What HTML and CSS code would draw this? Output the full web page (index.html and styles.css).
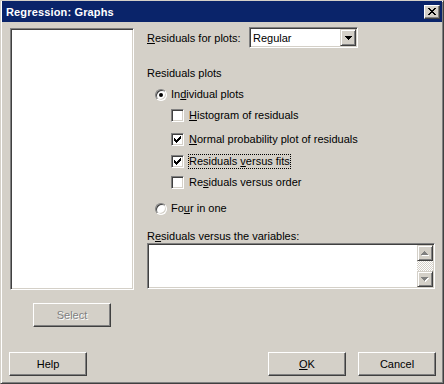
FILE: index.html
```html
<!DOCTYPE html>
<html lang="en">
<head>
  <meta charset="UTF-8" />
  <title>Regression: Graphs</title>
  <link rel="stylesheet" href="styles.css">
</head>
<body>

<div class="window">
  <div class="titlebar">
    <span class="title">Regression: Graphs</span>
    <span class="close-btn">
      <svg width="8" height="7" viewBox="0 0 8 7" shape-rendering="crispEdges">
        <path d="M0 0h2v1H0z M6 0h2v1H6z M1 1h2v1H1z M5 1h2v1H5z M2 2h4v1H2z M3 3h2v1H3z M2 4h4v1H2z M1 5h2v1H1z M5 5h2v1H5z M0 6h2v1H0z M6 6h2v1H6z" fill="#000"/>
      </svg>
    </span>
  </div>

  <div class="content">
    <div class="left-col">
      <div class="listbox"></div>
      <button class="btn select-btn" disabled>Select</button>
    </div>

    <div class="right-col">
      <div class="field-row">
        <span class="field-label"><u>R</u>esiduals for plots:</span>
        <div class="combo">
          <span class="combo-text">Regular</span>
          <span class="arrow-btn">
            <svg width="7" height="4" viewBox="0 0 7 4" shape-rendering="crispEdges">
              <path d="M0 0h7v1H0z M1 1h5v1H1z M2 2h3v1H2z M3 3h1v1H3z" fill="#000"/>
            </svg>
          </span>
        </div>
      </div>

      <div class="group-label">Residuals plots</div>

      <div class="option radio-row row-individual"><span class="radio checked"></span>In<u>d</u>ividual plots</div>

      <div class="option check-row row-hist"><span class="checkbox"></span><u>H</u>istogram of residuals</div>
      <div class="option check-row row-normal"><span class="checkbox checked"></span><u>N</u>ormal probability plot of residuals</div>
      <div class="option check-row row-fits"><span class="checkbox checked"></span><span class="focus">Residuals <u>v</u>ersus fits</span></div>
      <div class="option check-row row-order"><span class="checkbox"></span>Re<u>s</u>iduals versus order</div>

      <div class="option radio-row row-four"><span class="radio"></span>Fo<u>u</u>r in one</div>

      <div class="vars-label">R<u>e</u>siduals versus the variables:</div>
      <div class="vars-box">
        <div class="vars-text"></div>
        <div class="scrollbar">
          <span class="arrow-btn scroll-btn">
            <svg width="8" height="5" viewBox="0 0 8 5" shape-rendering="crispEdges">
              <path d="M4 1h1v1H4z M3 2h3v1H3z M2 3h5v1H2z M1 4h7v1H1z" fill="#fff"/>
              <path d="M3 0h1v1H3z M2 1h3v1H2z M1 2h5v1H1z M0 3h7v1H0z" fill="#808080"/>
            </svg>
          </span>
          <span class="track"></span>
          <span class="arrow-btn scroll-btn">
            <svg width="8" height="5" viewBox="0 0 8 5" shape-rendering="crispEdges">
              <path d="M1 1h7v1H1z M2 2h5v1H2z M3 3h3v1H3z M4 4h1v1H4z" fill="#fff"/>
              <path d="M0 0h7v1H0z M1 1h5v1H1z M2 2h3v1H2z M3 3h1v1H3z" fill="#808080"/>
            </svg>
          </span>
        </div>
      </div>
    </div>
  </div>

  <div class="footer">
    <button class="btn">Help</button>
    <span class="spacer"></span>
    <button class="btn"><u>O</u>K</button>
    <button class="btn">Cancel</button>
  </div>
</div>

</body>
</html>
```

FILE: styles.css
```css
body { margin: 0; padding: 0; background-color: #d4d0c8; font-family: "Liberation Sans", Arial, sans-serif; font-size: 11px; color: #000; }

/* window frame */
.window {
  width: 444px; height: 384px; box-sizing: border-box; display: flex; flex-direction: column;
  background-color: #d4d0c8; padding: 0 1px 1px 1px;
  border: 1px solid; border-color: #d4d0c8 #404040 #404040 #d4d0c8;
  box-shadow: inset 1px 1px #fff, inset -1px -1px #808080;
}
.titlebar { height: 21px; background-color: #0a246a; display: flex; align-items: center; justify-content: space-between; padding: 0 2px 0 4px; }
.title { color: white; font-weight: bold; font-size: 11px; letter-spacing: 0.15px; }
.close-btn {
  width: 16px; height: 14px; box-sizing: border-box; display: flex; align-items: center; justify-content: center;
  background: #d4d0c8; border: 1px solid; border-color: #fff #404040 #404040 #fff; box-shadow: inset -1px -1px #808080;
}

/* shared 3d bits */
.btn {
  width: 78px; height: 24px; box-sizing: border-box; padding: 0; background: #d4d0c8;
  font-family: inherit; font-size: 11px; color: #000;
  border: 1px solid; border-color: #fff #404040 #404040 #fff; box-shadow: inset -1px -1px #808080;
}
.btn:disabled { color: #808080; text-shadow: 1px 1px #fff; }
.sunken {
  border: 1px solid; border-color: #808080 #fff #fff #808080;
  box-shadow: inset 1px 1px #404040, inset -1px -1px #d4d0c8;
}
.arrow-btn {
  width: 16px; box-sizing: border-box; display: flex; align-items: center; justify-content: center; background: #d4d0c8;
  border: 1px solid; border-color: #d4d0c8 #404040 #404040 #d4d0c8;
  box-shadow: inset 1px 1px #fff, inset -1px -1px #808080;
}

/* body */
.content { display: grid; grid-template-columns: 124px 1fr; column-gap: 13px; padding: 5px 7px 0 8px; }
.left-col { display: flex; flex-direction: column; margin-top: 1px; }
.listbox {
  height: 262px; background: white; box-sizing: border-box;
  border: 1px solid; border-color: #808080 #fff #fff #808080;
  box-shadow: inset 1px 1px #404040, inset -1px -1px #d4d0c8;
}
.select-btn { margin: 13px 0 0 23px; }

.right-col { display: flex; flex-direction: column; }
.field-row { display: flex; align-items: center; height: 21px; }
.field-label { width: 102px; }
.combo {
  width: 109px; height: 21px; box-sizing: border-box; display: flex; align-items: stretch; background: white;
  border: 1px solid; border-color: #808080 #fff #fff #808080;
  box-shadow: inset 1px 1px #404040, inset -1px -1px #d4d0c8; padding: 1px;
}
.combo-text { flex: 1; display: flex; align-items: center; padding-left: 2px; }

.group-label { margin-top: 19px; line-height: 13px; height: 13px; }
.option { display: flex; align-items: center; height: 13px; line-height: 13px; white-space: nowrap; }
.radio-row { margin-left: 8px; }
.check-row { margin-left: 24px; }
.row-individual { margin-top: 8px; }
.row-hist { margin-top: 8px; }
.row-normal { margin-top: 11px; }
.row-fits { margin-top: 9px; }
.row-order { margin-top: 8px; }
.row-four { margin-top: 13px; }

.radio {
  width: 12px; height: 12px; box-sizing: border-box; border-radius: 50%; background: white; margin-right: 4px;
  display: flex; align-items: center; justify-content: center;
  border: 1px solid; border-color: #808080 #fff #fff #808080;
  box-shadow: inset 1px 1px #404040, inset -1px -1px #d4d0c8;
}
.radio.checked::after { content: ""; width: 4px; height: 4px; border-radius: 50%; background: #000; }
.checkbox {
  width: 13px; height: 13px; box-sizing: border-box; background: white; margin-right: 5px;
  display: flex; align-items: center; justify-content: center;
  border: 1px solid; border-color: #808080 #fff #fff #808080;
  box-shadow: inset 1px 1px #404040, inset -1px -1px #d4d0c8;
}
.checkbox.checked {
  background: white url("data:image/svg+xml,%3Csvg xmlns='http://www.w3.org/2000/svg' width='7' height='7' shape-rendering='crispEdges'%3E%3Cpath d='M6 0h1v1H6z M5 1h2v1H5z M0 2h1v1H0z M4 2h3v1H4z M0 3h2v1H0z M3 3h3v1H3z M0 4h5v1H0z M1 5h3v1H1z M2 6h1v1H2z' fill='%23000'/%3E%3C/svg%3E") no-repeat 2px 2px;
}
.focus { outline: 1px dotted #000; }

.vars-label { margin-top: 15px; height: 13px; line-height: 13px; }
.vars-box {
  height: 46px; box-sizing: border-box; display: flex; background: white; padding: 1px;
  border: 1px solid; border-color: #808080 #fff #fff #808080;
  box-shadow: inset 1px 1px #404040, inset -1px -1px #d4d0c8;
}
.vars-text { flex: 1; }
.scrollbar { width: 16px; display: flex; flex-direction: column; }
.scroll-btn { height: 16px; }
.track { flex: 1; background: repeating-conic-gradient(#fff 0 25%, #d4d0c8 0 50%) 0 0 / 2px 2px; }

/* bottom buttons */
.footer { margin-top: auto; display: flex; gap: 12px; padding: 0 6px 6px 7px; }
.spacer { flex: 1; }
```
